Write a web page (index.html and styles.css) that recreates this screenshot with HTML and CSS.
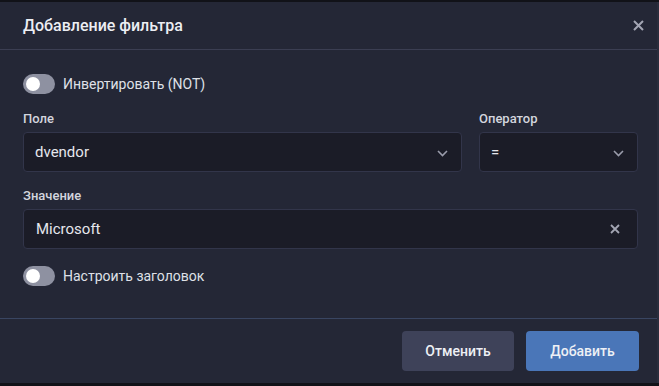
FILE: index.html
```html
<!DOCTYPE html>
<html lang="ru">
<head>
    <meta charset="UTF-8">
    <meta name="viewport" content="width=device-width, initial-scale=1.0">
    <title>Добавление фильтра</title>
    <link rel="stylesheet" href="styles.css">
</head>
<body>
    <div class="dialog">
        <div class="dialog-header">
            <h2>Добавление фильтра</h2>
            <button class="close-btn" aria-label="Закрыть">
                <svg width="11" height="11" viewBox="0 0 11 11"><path d="M1 1L10 10M10 1L1 10" stroke="#a3a5b3" stroke-width="2"/></svg>
            </button>
        </div>

        <div class="dialog-body">
            <label class="switch-row">
                <span class="switch"><span class="knob"></span></span>
                <span>Инвертировать (NOT)</span>
            </label>

            <div class="field-row">
                <div class="field field-main">
                    <div class="field-label">Поле</div>
                    <div class="control">
                        <span class="value">dvendor</span>
                        <svg class="chevron" width="11" height="7" viewBox="0 0 11 7"><path d="M1 1L5.5 5.5L10 1" stroke="#9a9cab" stroke-width="1.6" fill="none"/></svg>
                    </div>
                </div>
                <div class="field field-op">
                    <div class="field-label">Оператор</div>
                    <div class="control">
                        <span class="value">=</span>
                        <svg class="chevron" width="11" height="7" viewBox="0 0 11 7"><path d="M1 1L5.5 5.5L10 1" stroke="#9a9cab" stroke-width="1.6" fill="none"/></svg>
                    </div>
                </div>
            </div>

            <div class="field">
                <div class="field-label">Значение</div>
                <div class="control">
                    <span class="value value-input">Microsoft</span>
                    <svg class="clear" width="10" height="10" viewBox="0 0 10 10"><path d="M1 1L9 9M9 1L1 9" stroke="#a3a5b3" stroke-width="1.8"/></svg>
                </div>
            </div>

            <label class="switch-row">
                <span class="switch"><span class="knob"></span></span>
                <span>Настроить заголовок</span>
            </label>
        </div>

        <div class="dialog-footer">
            <button class="btn btn-cancel">Отменить</button>
            <button class="btn btn-primary">Добавить</button>
        </div>
    </div>
</body>
</html>
```

FILE: styles.css
```css
body {
    margin: 0;
    background: #111218;
    font-family: Roboto, "Noto Sans", sans-serif;
    color: #e4e5ec;
    height: 386px;
    overflow: hidden;
}

.dialog {
    margin-top: 2px;
    width: 657px;
    height: 381px;
    background: #242736;
    border-right: 2px solid #2a2d3c;
    display: flex;
    flex-direction: column;
}

.dialog-header {
    height: 47px;
    display: flex;
    align-items: center;
    justify-content: space-between;
    padding: 0 13px 0 23px;
    border-bottom: 1px solid #3b3e52;
}

.dialog-header h2 {
    margin: 0;
    font-size: 16px;
    font-weight: 500;
    color: #eceef3;
}

.close-btn {
    background: none;
    border: none;
    padding: 0;
    display: flex;
    cursor: pointer;
}

.dialog-body {
    flex: 1;
    padding: 24px 19px 0 23px;
    display: flex;
    flex-direction: column;
}

.switch-row {
    display: flex;
    align-items: center;
    gap: 8px;
    font-size: 14px;
    font-weight: 400;
    color: #dfe0e7;
    height: 20px;
}

.switch {
    width: 32px;
    height: 20px;
    border-radius: 10px;
    background: #8e91a1;
    position: relative;
    flex-shrink: 0;
}

.knob {
    position: absolute;
    left: 3px;
    top: 3px;
    width: 14px;
    height: 14px;
    border-radius: 50%;
    background: #fff;
}

.field-row {
    display: flex;
    gap: 17px;
    margin-top: 17px;
}

.field-main {
    flex: 1;
}

.field-op {
    width: 159px;
}

.field-label {
    font-size: 13px;
    font-weight: 500;
    color: #d3d5de;
    height: 15px;
    line-height: 15px;
    margin-bottom: 6px;
}

.control {
    height: 38px;
    border: 1px solid #32354a;
    border-radius: 4px;
    background: #1b1c27;
    display: flex;
    align-items: center;
    justify-content: space-between;
    padding: 0 13px 0 11px;
}

.value {
    font-size: 15px;
    color: #e6e7ed;
}

.value-input {
    padding-left: 1px;
}

.chevron {
    margin-top: 2px;
}

.clear {
    margin-right: 4px;
}

.dialog-body > .field {
    margin-top: 16px;
}

.dialog-body > .switch-row:last-child {
    margin-top: 17px;
}

.dialog-footer {
    height: 64px;
    border-top: 1px solid #394561;
    display: flex;
    justify-content: flex-end;
    align-items: center;
    gap: 12px;
    padding: 0 18px 0 0;
}

.btn {
    height: 40px;
    border: none;
    border-radius: 4px;
    font-family: inherit;
    font-size: 14px;
    font-weight: 500;
    color: #eef0f5;
    cursor: pointer;
}

.btn-cancel {
    width: 112px;
    background: #3e4259;
}

.btn-primary {
    width: 113px;
    background: #4a76b8;
}
```
